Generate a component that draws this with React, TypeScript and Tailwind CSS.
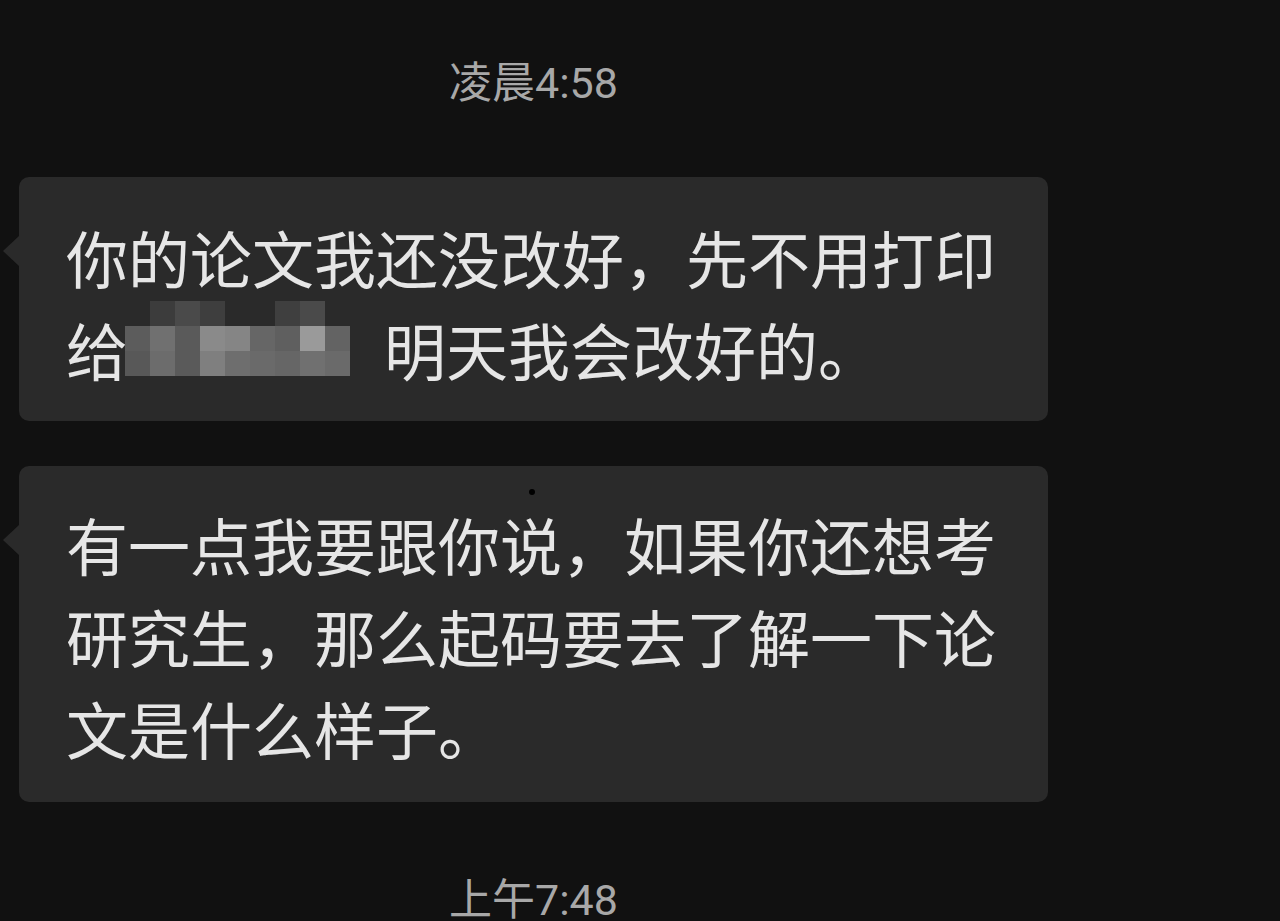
import React from 'react'

const cjk = { fontFamily: '"Noto Sans CJK SC", "Noto Sans", sans-serif' }
const stamp = { fontFamily: 'Roboto, "Noto Sans CJK SC", sans-serif' }

// mosaic cells covering the redacted name, 9 cols x 3 rows
const mosaic = [
  ['#2a2a2a', '#3c3c3c', '#4a4a4a', '#3e3e3e', '#2a2a2a', '#2a2a2a', '#3f3f3f', '#4a4a4a', '#2a2a2a'],
  ['#5c5c5c', '#707070', '#5a5a5a', '#8a8a8a', '#858585', '#666666', '#5f5f5f', '#9a9a9a', '#636363'],
  ['#585858', '#6c6c6c', '#5a5a5a', '#7f7f7f', '#6e6e6e', '#6a6a6a', '#666666', '#707070', '#6a6a6a'],
]

function Redacted() {
  return (
    <span className="relative inline-block h-0 w-[256px]">
      <span className="absolute bottom-0 left-[-3px] flex flex-col">
        {mosaic.map((row, r) => (
          <span key={r} className="flex">
            {row.map((c, i) => (
              <span key={i} className="h-[25px] w-[25px] blur-[0.6px]" style={{ backgroundColor: c }} />
            ))}
          </span>
        ))}
      </span>
    </span>
  )
}

function Bubble({ children, className }: { children: React.ReactNode; className: string }) {
  return (
    <div className={`relative w-[1029px] rounded-[10px] bg-[#2a2a2a] px-[47px] text-[62px] leading-[92px] text-[#e6e6e6] ${className}`} style={cjk}>
      <span className="absolute left-[-16px] top-[59px] h-0 w-0 border-y-[15px] border-r-[16px] border-y-transparent border-r-[#2a2a2a]" />
      {children}
    </div>
  )
}

function Stamp({ children }: { children: React.ReactNode }) {
  return (
    <div className="text-[43px] leading-[48px] text-[#a8a8a8]" style={stamp}>
      {children}
    </div>
  )
}

export default function App() {
  return (
    <div className="h-[921px] w-[1280px] overflow-hidden bg-[#111111]">
      <div className="ml-[19px] flex w-[1029px] flex-col items-center pt-[59px]">
        <Stamp>凌晨4:58</Stamp>

        <Bubble className="mt-[70px] pt-[34px] pb-[26px]">
          <div>你的论文我还没改好，先不用打印</div>
          <div>
            给<Redacted />明天我会改好的。
          </div>
        </Bubble>

        <Bubble className="mt-[45px] pt-[32px] pb-[28px]">
          <span className="absolute left-[510px] top-[23px] h-[6px] w-[6px] rounded-full bg-black" />
          有一点我要跟你说，如果你还想考研究生，那么起码要去了解一下论文是什么样子。
        </Bubble>

        <div className="mt-[74px]">
          <Stamp>上午7:48</Stamp>
        </div>
      </div>
    </div>
  )
}
